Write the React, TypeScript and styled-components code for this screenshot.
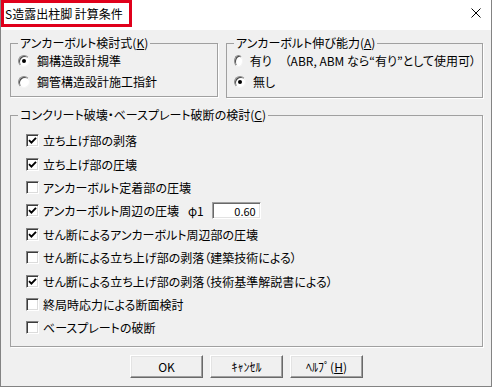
import styled, { createGlobalStyle } from "styled-components";

const GlobalStyle = createGlobalStyle`
  html, body {
    margin: 0;
    padding: 0;
    background: #f0f0f0;
  }
  body {
    font-family: "Noto Sans CJK JP", "Noto Sans", sans-serif;
    font-size: 12px;
    color: #000;
  }
`;

const Window = styled.div`
  width: 492px;
  height: 387px;
  box-sizing: border-box;
  border: 1px solid #838383;
  border-top: none;
  background: #f0f0f0;
  display: flex;
  flex-direction: column;
`;

const TitleBar = styled.div`
  height: 30px;
  background: #fff;
  display: flex;
  justify-content: space-between;
  align-items: flex-start;
`;

const TitleLabel = styled.div`
  width: 131px;
  height: 27px;
  box-sizing: border-box;
  border: 3px solid #e0001b;
  padding-left: 1px;
  display: flex;
  align-items: center;
  font-size: 12px;
  line-height: 14px;
  white-space: nowrap;
`;

const CloseIcon = styled.svg`
  margin: 8px 10px 0 0;
`;

const Body = styled.div`
  flex: 1;
  padding: 6px 8px 0 9px;
  display: flex;
  flex-direction: column;
`;

const TopRow = styled.div`
  display: flex;
  gap: 8px;
`;

const Group = styled.fieldset<{ $w?: number; $h: number; $mt?: number }>`
  margin: ${(p) => p.$mt ?? 0}px 0 0 0;
  padding: 0 6px 0 6px;
  min-width: 0;
  box-sizing: border-box;
  width: ${(p) => (p.$w ? `${p.$w}px` : "auto")};
  height: ${(p) => p.$h}px;
  border: 1px solid #a0a0a0;
  box-shadow: 1px 1px 0 #fff;
`;

const Legend = styled.legend`
  margin-left: 1px;
  padding: 0 2px;
  font-size: 12px;
  line-height: 14px;
  font-feature-settings: "palt";
`;

const RadioRow = styled.label`
  height: 21px;
  display: flex;
  align-items: center;
  gap: 7px;
  padding-left: 1px;
  font-feature-settings: "palt";
  white-space: nowrap;
`;

const RadioDot = styled.span<{ $on?: boolean }>`
  width: 12px;
  height: 12px;
  box-sizing: border-box;
  border-radius: 50%;
  border: 1px solid;
  border-color: #8c8c8c #f4f4f4 #f4f4f4 #8c8c8c;
  box-shadow: inset 1px 1px 0 #4a4a4a;
  background: #fff;
  display: flex;
  align-items: center;
  justify-content: center;
  &::after {
    content: "";
    width: 4px;
    height: 4px;
    border-radius: 50%;
    background: ${(p) => (p.$on ? "#000" : "transparent")};
  }
`;

const Note = styled.span`
  margin-left: 6px;
`;

const CheckList = styled.div`
  padding: 7px 0 0 9px;
`;

const CheckRow = styled.label`
  height: 23.4px;
  display: flex;
  align-items: center;
  font-feature-settings: "palt";
  white-space: nowrap;
`;

const Box = styled.span`
  width: 13px;
  height: 13px;
  box-sizing: border-box;
  margin-right: 4px;
  border: 1px solid;
  border-color: #848484 #fff #fff #848484;
  box-shadow: inset 1px 1px 0 #3c3c3c, inset -1px -1px 0 #dcdcdc;
  background: #fff;
  display: flex;
  align-items: center;
  justify-content: center;
`;

const Phi = styled.span`
  margin-left: 9px;
`;

const NumBox = styled.span`
  margin-left: 8px;
  width: 49px;
  height: 17px;
  box-sizing: border-box;
  border: 1px solid;
  border-color: #a0a0a0 #fff #fff #a0a0a0;
  box-shadow: inset 1px 1px 0 #696969, inset -1px -1px 0 #e3e3e3;
  background: #fff;
  padding-right: 4px;
  display: flex;
  align-items: center;
  justify-content: flex-end;
  font-size: 11px;
  line-height: 14px;
`;

const ButtonRow = styled.div`
  margin-top: 8px;
  display: flex;
  justify-content: center;
  gap: 7px;
`;

const Button = styled.button`
  width: 73px;
  height: 23px;
  box-sizing: border-box;
  padding: 0;
  border: 1px solid;
  border-color: #fff #696969 #696969 #fff;
  box-shadow: inset -1px -1px 0 #a0a0a0, inset 1px 1px 0 #e3e3e3;
  background: #f0f0f0;
  font-family: inherit;
  font-size: 12px;
  line-height: 14px;
  color: #000;
`;

function Check({ on }: { on?: boolean }) {
  return (
    <Box>
      {on ? (
        <svg width="9" height="9" viewBox="0 0 9 9">
          <path d="M1 4.2 L3.4 6.6 L8 1.8" fill="none" stroke="#000" strokeWidth="1.9" />
        </svg>
      ) : null}
    </Box>
  );
}

const checks: { label: string; on: boolean }[] = [
  { label: "立ち上げ部の剥落", on: true },
  { label: "立ち上げ部の圧壊", on: true },
  { label: "アンカーボルト定着部の圧壊", on: false },
  { label: "アンカーボルト周辺の圧壊", on: true },
  { label: "せん断によるアンカーボルト周辺部の圧壊", on: true },
  { label: "せん断による立ち上げ部の剥落（建築技術による）", on: false },
  { label: "せん断による立ち上げ部の剥落（技術基準解説書による）", on: true },
  { label: "終局時応力による断面検討", on: false },
  { label: "ベースプレートの破断", on: false },
];

export default function App() {
  return (
    <>
      <GlobalStyle />
      <Window>
        <TitleBar>
          <TitleLabel>S造露出柱脚 計算条件</TitleLabel>
          <CloseIcon width="10" height="10" viewBox="0 0 10 10">
            <path d="M0.5 0.5 L9.5 9.5 M9.5 0.5 L0.5 9.5" stroke="#000" strokeWidth="1" />
          </CloseIcon>
        </TitleBar>
        <Body>
          <TopRow>
            <Group $w={208} $h={61}>
              <Legend>
                アンカーボルト検討式(<u>K</u>)
              </Legend>
              <RadioRow>
                <RadioDot $on />
                鋼構造設計規準
              </RadioRow>
              <RadioRow>
                <RadioDot />
                鋼管構造設計施工指針
              </RadioRow>
            </Group>
            <Group $w={257} $h={62}>
              <Legend>
                アンカーボルト伸び能力(<u>A</u>)
              </Legend>
              <RadioRow>
                <RadioDot />
                有り<Note>（ABR, ABM なら“有り”として使用可）</Note>
              </RadioRow>
              <RadioRow>
                <RadioDot $on />
                無し
              </RadioRow>
            </Group>
          </TopRow>
          <Group $h={239} $mt={10}>
            <Legend>
              コンクリート破壊・ベースプレート破断の検討(<u>C</u>)
            </Legend>
            <CheckList>
              {checks.map((c, i) => (
                <CheckRow key={i}>
                  <Check on={c.on} />
                  {c.label}
                  {i === 3 ? (
                    <>
                      <Phi>φ1</Phi>
                      <NumBox>0.60</NumBox>
                    </>
                  ) : null}
                </CheckRow>
              ))}
            </CheckList>
          </Group>
          <ButtonRow>
            <Button>OK</Button>
            <Button>ｷｬﾝｾﾙ</Button>
            <Button>
              ﾍﾙﾌﾟ(<u>H</u>)
            </Button>
          </ButtonRow>
        </Body>
      </Window>
    </>
  );
}
